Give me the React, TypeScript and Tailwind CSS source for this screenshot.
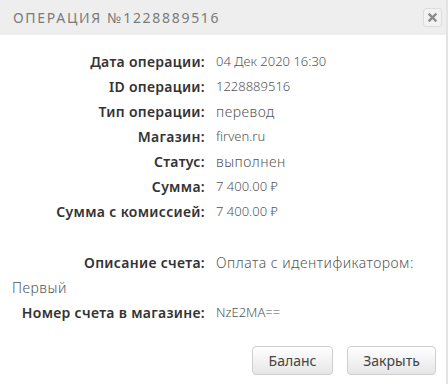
import React from "react"

// ── Operation Details Dialog ───────────────────────────────────────────────────

const NOTO = '"Noto Sans", "Open Sans", sans-serif'

// wide = Cyrillic-heavy value, drawn a bit larger and looser
const ROWS: [string, string, boolean][] = [
  ["Дата операции:", "04 Дек 2020 16:30", false],
  ["ID операции:", "1228889516", false],
  ["Тип операции:", "перевод", true],
  ["Магазин:", "firven.ru", false],
  ["Статус:", "выполнен", true],
  ["Сумма:", "7 400.00 ₽", false],
  ["Сумма с комиссией:", "7 400.00 ₽", false],
]

const WIDE = "text-[14px] leading-[25px] tracking-[0.5px] font-light text-[#555]"
const NARROW = "text-[13px] leading-[25px] font-light text-[#555]"

function Label({ children }: { children: React.ReactNode }) {
  return (
    <span className="inline-block align-top w-[204px] pr-[11px] text-right text-[14px] leading-[25px] font-semibold tracking-[0.3px] text-[#333]">
      {children}
    </span>
  )
}

function Row({ label, value, wide }: { label: string; value: string; wide?: boolean }) {
  return (
    <div className="h-[25px] leading-[25px] pl-[12px] whitespace-nowrap">
      <Label>{label}</Label>
      <span className={wide ? WIDE : NARROW}>{value}</span>
    </div>
  )
}

function Button({ w, children }: { w: string; children: React.ReactNode }) {
  return (
    <button
      className={`${w} h-[29px] rounded-[4px] border border-[#cfcfcf] bg-gradient-to-b from-white to-[#e6e6e6] text-[14px] text-[#444] shadow-[inset_0_1px_0_#fff]`}
    >
      {children}
    </button>
  )
}

export default function App() {
  return (
    <div
      className="w-[448px] h-[384px] bg-white border-r-2 border-[#e3e3e3] flex flex-col text-[13px]"
      style={{ fontFamily: NOTO }}
    >
      {/* Header */}
      <div className="h-[35px] shrink-0 bg-[#eeeeee] flex items-center justify-between pl-[13px] pr-[4px]">
        <div className="text-[14px] tracking-[1.7px] text-[#7a7a7a]">ОПЕРАЦИЯ №1228889516</div>
        <button className="w-[19px] h-[19px] rounded-[3px] border border-[#dcdcdc] bg-[#f2f2f2] flex items-center justify-center">
          <svg width="9" height="9" viewBox="0 0 9 9">
            <path d="M1.5 1.5 L7.5 7.5 M7.5 1.5 L1.5 7.5" stroke="#8a8a8a" strokeWidth="2.4" strokeLinecap="square" />
          </svg>
        </button>
      </div>

      {/* Body */}
      <div className="pt-[14px]">
        {ROWS.map(([l, v, w]) => <Row key={l} label={l} value={v} wide={w} />)}
        <div className="h-[26px]" />
        {/* description wraps onto a second line that starts at the left edge */}
        <Row label="Описание счета:" value="Оплата с идентификатором:" wide />
        <div className={`h-[25px] pl-[12px] ${WIDE}`}>Первый</div>
        <Row label="Номер счета в магазине:" value="NzE2MA==" />
      </div>

      {/* Footer buttons */}
      <div className="flex justify-end gap-[14px] pr-[10px] mt-[21px]">
        <Button w="w-[81px]">Баланс</Button>
        <Button w="w-[89px]">Закрыть</Button>
      </div>
    </div>
  )
}
